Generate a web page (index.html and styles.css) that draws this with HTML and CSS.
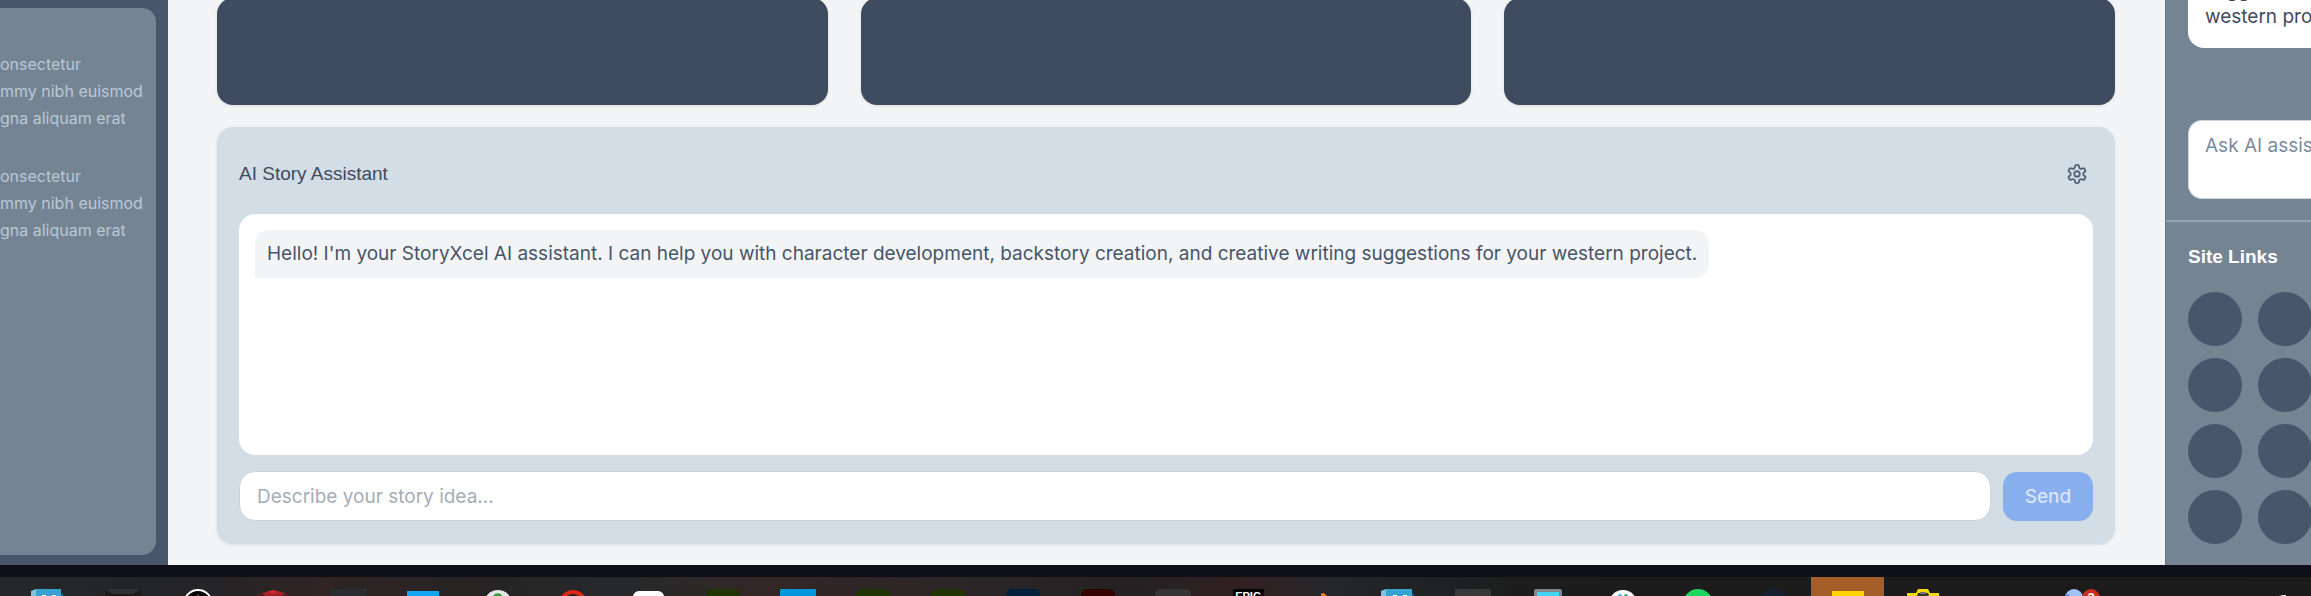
FILE: index.html
```html
<!DOCTYPE html>
<html lang="en">
<head>
<meta charset="utf-8">
<title>StoryXcel</title>
<link rel="stylesheet" href="styles.css">
</head>
<body>
<div class="app">
  <aside class="outline">
    <div class="outline-card">
      <p>onsectetur<br>mmy nibh euismod<br>gna aliquam erat</p>
      <p>onsectetur<br>mmy nibh euismod<br>gna aliquam erat</p>
    </div>
  </aside>

  <main class="main">
    <div class="tiles">
      <div class="tile"></div>
      <div class="tile"></div>
      <div class="tile"></div>
    </div>
    <section class="assistant">
      <header class="assistant-head">
        <h2>AI Story Assistant</h2>
        <button class="icon-button" type="button" aria-label="Settings">
          <svg viewBox="0 0 24 24" fill="none" stroke="currentColor" stroke-width="2" stroke-linecap="round" stroke-linejoin="round"><path d="M12.22 2h-.44a2 2 0 0 0-2 2v.18a2 2 0 0 1-1 1.73l-.43.25a2 2 0 0 1-2 0l-.15-.08a2 2 0 0 0-2.73.73l-.22.38a2 2 0 0 0 .73 2.73l.15.1a2 2 0 0 1 1 1.72v.51a2 2 0 0 1-1 1.74l-.15.09a2 2 0 0 0-.73 2.73l.22.38a2 2 0 0 0 2.73.73l.15-.08a2 2 0 0 1 2 0l.43.25a2 2 0 0 1 1 1.73V20a2 2 0 0 0 2 2h.44a2 2 0 0 0 2-2v-.18a2 2 0 0 1 1-1.73l.43-.25a2 2 0 0 1 2 0l.15.08a2 2 0 0 0 2.73-.73l.22-.39a2 2 0 0 0-.73-2.73l-.15-.08a2 2 0 0 1-1-1.74v-.5a2 2 0 0 1 1-1.74l.15-.09a2 2 0 0 0 .73-2.73l-.22-.38a2 2 0 0 0-2.73-.73l-.15.08a2 2 0 0 1-2 0l-.43-.25a2 2 0 0 1-1-1.73V4a2 2 0 0 0-2-2z"/><circle cx="12" cy="12" r="3"/></svg>
        </button>
      </header>
      <div class="chat">
        <p class="message">Hello! I'm your StoryXcel AI assistant. I can help you with character development, backstory creation, and creative writing suggestions for your western project.</p>
      </div>
      <form class="composer">
        <input type="text" aria-label="Story idea" placeholder="Describe your story idea...">
        <button type="button" disabled>Send</button>
      </form>
    </section>
  </main>

  <aside class="side">
    <div class="side-chat">
      <p class="side-message">sugg<br>western pro</p>
      <textarea aria-label="Ask the assistant" placeholder="Ask AI assis"></textarea>
    </div>
    <nav class="links">
      <h3>Site Links</h3>
      <div class="link-grid">
        <a href="#" aria-label="Link 1"></a><a href="#" aria-label="Link 2"></a>
        <a href="#" aria-label="Link 3"></a><a href="#" aria-label="Link 4"></a>
        <a href="#" aria-label="Link 5"></a><a href="#" aria-label="Link 6"></a>
        <a href="#" aria-label="Link 7"></a><a href="#" aria-label="Link 8"></a>
      </div>
    </nav>
  </aside>
</div>

<footer class="taskbar">
  <div class="slot"><svg viewBox="0 0 40 7"><path d="M3 2l5-2v7H3z" fill="#7fc4dc"/><path d="M8 0h25v7H8z" fill="#35a3d0"/><path d="M33 4l3 3h-3z" fill="#176f94"/><path d="M14 6h4v1h-4zM24 6h4v1h-4z" fill="#fff"/></svg></div>
  <div class="slot"><svg viewBox="0 0 40 7"><path d="M2 0h36v7H2z" fill="#1b1b1b"/><path d="M2 0h36l-8 5H10z" fill="#303030"/></svg></div>
  <div class="slot"><svg viewBox="0 0 40 7"><circle cx="20" cy="15" r="14" fill="#000" stroke="#fff" stroke-width="2"/><path d="M18 7l2-3 2 3z" fill="#333"/></svg></div>
  <div class="slot"><svg viewBox="0 0 40 7"><path d="M9 4l11-3 12 3-3 3H12z" fill="#a41e26"/><path d="M14 3l6-2 7 2-7 2z" fill="#cc2930"/><path d="M4 7l4-3 2 3zM32 4l4 3h-5z" fill="#641719"/></svg></div>
  <div class="slot"><svg viewBox="0 0 40 7"><rect x="2" width="36" height="14" rx="2" fill="#292c31"/><path d="M36 0h2v2z" fill="#31535e"/></svg></div>
  <div class="slot"><svg viewBox="0 0 40 7"><path d="M4 2h32v5H4z" fill="#12a5f4"/></svg></div>
  <div class="slot"><svg viewBox="0 0 40 7"><circle cx="20" cy="15" r="14" fill="#e4e7e8"/><path d="M15 7q2-4 8-2l1 2z" fill="#37a335"/></svg></div>
  <div class="slot"><svg viewBox="0 0 40 7"><circle cx="20" cy="15" r="12" fill="#222" stroke="#e02716" stroke-width="4"/></svg></div>
  <div class="slot"><svg viewBox="0 0 40 7"><rect x="5" y="2" width="31" height="20" rx="6" fill="#fff"/></svg></div>
  <div class="slot"><svg viewBox="0 0 40 7"><rect x="3" y="0" width="34" height="20" rx="6" fill="#203402"/></svg></div>
  <div class="slot"><svg viewBox="0 0 40 7"><path d="M2 0h36v7H2z" fill="#0097dc"/></svg></div>
  <div class="slot"><svg viewBox="0 0 40 7"><rect x="3" y="0" width="34" height="20" rx="6" fill="#203402"/></svg></div>
  <div class="slot"><svg viewBox="0 0 40 7"><rect x="3" y="0" width="34" height="20" rx="6" fill="#203402"/></svg></div>
  <div class="slot"><svg viewBox="0 0 40 7"><rect x="3" y="0" width="34" height="20" rx="6" fill="#00203c"/></svg></div>
  <div class="slot"><svg viewBox="0 0 40 7"><rect x="3" y="0" width="34" height="20" rx="6" fill="#350000"/></svg></div>
  <div class="slot"><svg viewBox="0 0 40 7"><rect x="2" y="0" width="36" height="20" rx="6" fill="#343434"/></svg></div>
  <div class="slot"><svg viewBox="0 0 40 7"><rect x="5" y="0" width="31" height="20" rx="2" fill="#000"/><text class="epic" x="20" y="11" text-anchor="middle">EPIC</text></svg></div>
  <div class="slot"><svg viewBox="0 0 40 7"><path d="M18 5q2-2 4 0l2 2h-6z" fill="#ed7f12"/></svg></div>
  <div class="slot"><svg viewBox="0 0 40 7"><path d="M3 2l5-2v7H3z" fill="#7fc4dc"/><path d="M8 0h26v7H8z" fill="#35a3d0"/><path d="M34 4l3 3h-3z" fill="#176f94"/><path d="M15 6h4v1h-4zM25 6h4v1h-4z" fill="#fff"/></svg></div>
  <div class="slot"><svg viewBox="0 0 40 7"><path d="M2 0h36v7H2z" fill="#383838"/></svg></div>
  <div class="slot"><svg viewBox="0 0 40 7"><rect x="6" width="28" height="12" rx="2" fill="#7d8790"/><path d="M9 3h22v4H9z" fill="#42d3f5"/></svg></div>
  <div class="slot"><svg viewBox="0 0 40 7"><circle cx="20" cy="15" r="14" fill="#fff"/><circle cx="17" cy="7" r="2" fill="#41b9e5"/><circle cx="23" cy="7" r="2" fill="#35ad7b"/></svg></div>
  <div class="slot"><svg viewBox="0 0 40 7"><circle cx="20" cy="15" r="15" fill="#1fd760"/></svg></div>
  <div class="slot"><svg viewBox="0 0 40 7"><circle cx="20" cy="15" r="15" fill="#17202f"/></svg></div>
  <div class="slot slot-active"><svg viewBox="0 0 40 7"><path d="M4 2h32v5H4z" fill="#ffd500"/></svg></div>
  <div class="slot"><svg viewBox="0 0 40 7"><path d="M4 4h9l2-4h10l2 4h9v3H4z" fill="#f5d800"/><path d="M14 7l1-3h10l1 3z" fill="#34382c"/><path d="M17 3h6v2h-6z" fill="#73756a"/></svg></div>
  <div class="tray">
    <svg viewBox="0 0 40 7"><circle cx="13" cy="9" r="9" fill="#9fc3f4"/><path d="M4 7q0-2 3-2l2 2z" fill="#5d8fdc"/><circle cx="30" cy="9" r="9" fill="#ca2c20"/><text class="badge-count" x="30" y="13" text-anchor="middle">2</text></svg>
    <svg viewBox="0 0 40 7"><path d="M13 7q3-1 7-1v1z" fill="#fff"/></svg>
  </div>
</footer>
</body>
</html>
```
FILE: styles.css
```css
* { box-sizing: border-box; }

body {
  margin: 0;
  height: 100vh;
  overflow: hidden;
  display: flex;
  flex-direction: column;
  background: #0e0f18;
  font-family: Inter, "Liberation Sans", sans-serif;
  font-size: 19px;
  color: #475569;
}

h2, h3, p { margin: 0; }
h2, h3 { font-family: "Liberation Sans", Arial, sans-serif; font-size: 19px; line-height: 28px; }
button, input, textarea { font: inherit; }

.app { flex: 1; min-height: 0; display: flex; overflow: hidden; }

/* Left column */
.outline {
  flex: none;
  width: 168px;
  padding: 8px 12px 10px 0;
  background: #48566b;
}
.outline-card {
  height: 100%;
  padding-top: 43px;
  border-radius: 0 14px 14px 0;
  background: #758493;
  color: #b9c7d6;
  font-size: 16px;
  line-height: 27px;
  white-space: nowrap;
}
.outline-card p + p { margin-top: 31px; }

/* Centre column */
.main {
  flex: 1;
  min-width: 0;
  display: flex;
  flex-direction: column;
  justify-content: flex-end;
  gap: 22px;
  padding: 0 50px 21px 49px;
  background: #f3f4f6;
}
.tiles { display: grid; grid-template-columns: repeat(3, 1fr); gap: 33px; }
.tile { height: 107px; border-radius: 16px; background: #3f4b5e; box-shadow: 0 1px 3px #0000001a; }

.assistant {
  padding: 22px 22px 23px;
  border-radius: 16px;
  background: #d3dde6;
  box-shadow: 0 1px 3px #0000001a;
}
.assistant-head {
  display: flex;
  align-items: center;
  justify-content: space-between;
  height: 49px;
  margin-bottom: 16px;
}
.assistant-head h2 { font-weight: 400; color: #3f4b5e; }
.icon-button { display: flex; padding: 5px; border: 0; background: none; color: #56657a; }
.icon-button svg { width: 22px; height: 22px; }
.chat {
  height: 241px;
  padding: 16px;
  border-radius: 16px;
  background: #fff;
}
.message {
  width: fit-content;
  padding: 11px 12px;
  border-radius: 14px 14px 14px 0;
  background: #f3f4f6;
  line-height: 26px;
}
.composer { display: flex; align-items: center; gap: 12px; margin-top: 16px; }
.composer input {
  flex: 1;
  min-width: 0;
  height: 50px;
  padding: 0 17px;
  border: 1px solid #cbd5e1;
  border-radius: 16px;
  background: #fff;
}
.composer input::placeholder { color: #a5adb9; opacity: 1; }
.composer button {
  width: 90px;
  height: 49px;
  padding: 0;
  border: 0;
  border-radius: 14px;
  background: #88afee;
  color: #dae5f8;
  font-weight: 500;
}

/* Right column */
.side {
  flex: none;
  width: 146px;
  overflow: hidden;
  border-left: 1px solid #64748b;
  background: #758493;
  white-space: nowrap;
}
.side-chat {
  display: flex;
  flex-direction: column;
  gap: 72px;
  height: 222px;
  padding: 0 0 21px 22px;
  border-bottom: 2px solid #94a3b8;
  justify-content: flex-end;
}
.side-message {
  padding: 0 0 18px 17px;
  border-radius: 0 0 0 16px;
  background: #fff;
  color: #3f4b5e;
  line-height: 26px;
}
.side textarea {
  flex: none;
  display: block;
  height: 79px;
  padding: 12px 0 0 16px;
  border: 1px solid #cbd5e1;
  border-right: 0;
  border-radius: 14px 0 0 14px;
  background: #fff;
  line-height: 26px;
  resize: none;
  overflow: hidden;
  white-space: nowrap;
}
.side textarea::placeholder { color: #7b8a9f; opacity: 1; white-space: nowrap; }
.links { padding: 21px 0 0 22px; }
.links h3 { color: #fff; }
.link-grid {
  display: grid;
  grid-template-columns: repeat(2, 54px);
  gap: 12px 16px;
  margin-top: 21px;
}
.link-grid a { height: 54px; border-radius: 50%; background: #48566b; }

/* Taskbar */
.taskbar {
  flex: none;
  display: flex;
  gap: 2px;
  height: 19px;
  margin-top: 12px;
  padding-left: 11px;
  background: linear-gradient(90deg, #252728, #242426 9%, #302424 14%, #262424 21%, #26292a 27%, #332626 33%, #282527 44%, #242123 49%, #322022 54%, #23272a 58%, #1c1c1c 66%, #1b1b1b);
}
.slot { flex: none; display: flex; align-items: flex-end; justify-content: center; width: 73px; }
.slot-active { background: #a45d27; }
.taskbar svg { display: block; width: 40px; height: 7px; }
.epic { font: 700 11px "Liberation Sans", sans-serif; fill: #fff; }
.badge-count { font: 700 13px "Liberation Sans", sans-serif; fill: #fff; }
.tray { flex: 1; display: flex; align-items: flex-end; justify-content: space-between; padding: 0 5px 0 100px; }
```
